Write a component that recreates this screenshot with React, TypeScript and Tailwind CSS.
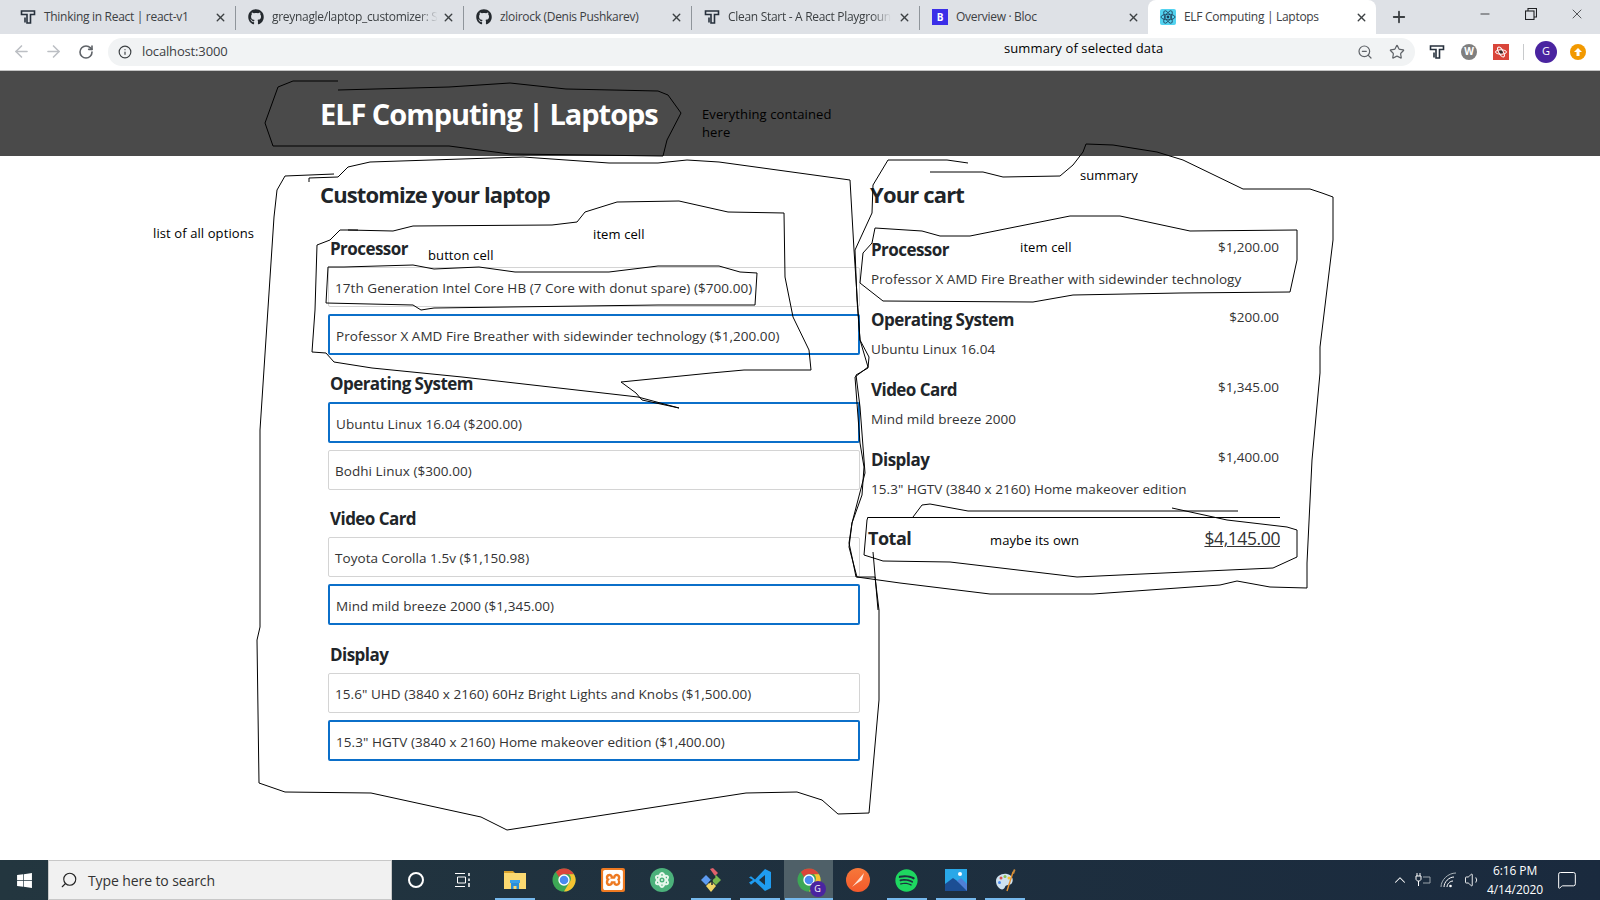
import React from 'react';
import { ArrowLeft, ArrowRight, RotateCw, Info, ZoomOut, Star, X, Plus, Minus, ChevronUp, Volume1, Search, MessageSquare } from 'lucide-react';
import { FaGithub, FaWindows, FaSpotify, FaAtom } from 'react-icons/fa';
import { SiXampp } from 'react-icons/si';

type Pt = [number, number];

const FONT = "font-['Open_Sans',sans-serif]";

const OPTIONS = [
  { name: 'Processor', mt: 'mt-[27px]', choices: [
    { label: '17th Generation Intel Core HB (7 Core with donut spare) ($700.00)', on: false },
    { label: 'Professor X AMD Fire Breather with sidewinder technology ($1,200.00)', on: true },
  ] },
  { name: 'Operating System', mt: 'mt-[17px]', choices: [
    { label: 'Ubuntu Linux 16.04 ($200.00)', on: true },
    { label: 'Bodhi Linux ($300.00)', on: false },
  ] },
  { name: 'Video Card', mt: 'mt-[17px]', choices: [
    { label: 'Toyota Corolla 1.5v ($1,150.98)', on: false },
    { label: 'Mind mild breeze 2000 ($1,345.00)', on: true },
  ] },
  { name: 'Display', mt: 'mt-[18px]', choices: [
    { label: '15.6" UHD (3840 x 2160) 60Hz Bright Lights and Knobs ($1,500.00)', on: false },
    { label: '15.3" HGTV (3840 x 2160) Home makeover edition ($1,400.00)', on: true },
  ] },
];

const CART = [
  { name: 'Processor', value: 'Professor X AMD Fire Breather with sidewinder technology', price: '$1,200.00' },
  { name: 'Operating System', value: 'Ubuntu Linux 16.04', price: '$200.00' },
  { name: 'Video Card', value: 'Mind mild breeze 2000', price: '$1,345.00' },
  { name: 'Display', value: '15.3" HGTV (3840 x 2160) Home makeover edition', price: '$1,400.00' },
];

// freehand marks somebody drew over the screenshot
const SCRIBBLES: Pt[][] = [
  [[338,81],[293,81],[278,87],[265,123],[273,146],[449,146],[510,154],[663,156],[667,140],[681,113],[668,95],[658,91],[566,89],[510,83],[449,87],[338,90]],
  [[334,174],[285,176],[277,190],[274,217],[260,430],[260,627],[257,640],[259,783],[285,792],[371,793],[481,817],[507,830],[746,793],[797,792],[822,800],[838,814],[869,813],[879,700],[879,610],[875,577],[856,577],[852,557],[849,543],[852,523],[862,495],[864,467],[860,443],[855,377],[868,367],[860,340],[854,250],[850,180],[719,162],[687,160],[658,163],[609,163],[523,157],[370,162],[348,167],[338,177],[309,178],[309,182]],
  [[358,230],[340,230],[330,240],[317,245],[315,310],[312,352],[326,353],[334,362],[372,368],[462,377],[638,397],[679,408],[642,400],[636,393],[621,382],[711,373],[744,370],[811,370],[809,350],[793,317],[785,277],[784,213],[728,212],[679,201],[617,202],[585,212],[577,222],[552,225],[413,226],[393,231],[348,230]],
  [[328,267],[344,267],[413,265],[434,269],[479,267],[515,272],[609,272],[658,266],[719,266],[740,272],[757,273],[755,305],[658,305],[434,308],[421,310],[413,305],[326,303],[328,267]],
  [[968,163],[947,160],[888,160],[873,185],[872,213],[855,250],[857,300],[860,340],[869,357],[868,368],[856,375],[860,407],[865,473],[852,523],[849,547],[857,577],[900,583],[990,594],[1093,594],[1220,585],[1237,581],[1270,587],[1307,588],[1307,563],[1312,460],[1320,373],[1320,347],[1333,240],[1333,197],[1322,193],[1310,189],[1243,189],[1183,160],[1157,152],[1113,145],[1086,144],[1083,152],[1073,165],[1060,176],[1003,177],[983,172],[930,172]],
  [[875,228],[922,231],[940,236],[970,236],[1070,216],[1120,216],[1190,231],[1297,230],[1297,260],[1290,292],[1180,293],[1073,295],[1033,302],[883,301],[860,283],[863,253],[872,243],[875,228]],
  [[913,517],[922,505],[930,504],[968,511],[1100,511],[1238,511]],
  [[1172,508],[1227,520],[1287,527],[1297,530],[1297,557],[1273,568],[1207,571],[1077,577],[950,562],[883,561],[864,555],[867,520],[868,517]],
  [[873,552],[878,610]],
];

const NOTES = [
  { text: 'list of all options', cls: 'left-[153px] top-[223px]' },
  { text: 'button cell', cls: 'left-[428px] top-[245px]' },
  { text: 'item cell', cls: 'left-[593px] top-[224px]' },
  { text: 'summary', cls: 'left-[1080px] top-[165px]' },
  { text: 'item cell', cls: 'left-[1020px] top-[237px]' },
  { text: 'maybe its own', cls: 'left-[990px] top-[530px]' },
  { text: 'summary of selected data', cls: 'left-[1004px] top-[38px]' },
  { text: 'Everything contained', cls: 'left-[702px] top-[104px]' },
  { text: 'here', cls: 'left-[702px] top-[122px]' },
];

const TLogo = ({ size = 16 }: { size?: number }) => (
  <svg width={size} height={size} viewBox="0 0 16 16" fill="none" stroke="#27313d" strokeWidth="1.6">
    <path d="M1.5 2h13v3.5h-4V14H7V5.500H1.500z" />
    <path d="M5 8.500v5" />
  </svg>
);

const ReactLogo = () => (
  <svg width="16" height="16" viewBox="0 0 16 16">
    <rect width="16" height="16" rx="2" fill="#53d3f0" />
    <g fill="none" stroke="#1d3b57" strokeWidth="0.8">
      <ellipse cx="8" cy="8" rx="7" ry="2.800" />
      <ellipse cx="8" cy="8" rx="7" ry="2.800" transform="rotate(60 8 8)" />
      <ellipse cx="8" cy="8" rx="7" ry="2.800" transform="rotate(120 8 8)" />
    </g>
    <circle cx="8" cy="8" r="1.400" fill="#1d3b57" />
  </svg>
);

const TABS: { title: string; icon: React.ReactNode; active?: boolean; fade?: boolean }[] = [
  { title: 'Thinking in React | react-v1', icon: <TLogo /> },
  { title: 'greynagle/laptop_customizer: S', icon: <FaGithub className="text-[16px] text-[#24292e]" />, fade: true },
  { title: 'zloirock (Denis Pushkarev)', icon: <FaGithub className="text-[16px] text-[#24292e]" /> },
  { title: 'Clean Start - A React Playgroun', icon: <TLogo />, fade: true },
  { title: 'Overview · Bloc', icon: <span className="flex h-4 w-4 items-center justify-center bg-[#3b2ee8] text-[10px] font-bold text-white">B</span> },
  { title: 'ELF Computing | Laptops', icon: <ReactLogo />, active: true },
];

const ChromeIcon = ({ size = 24 }: { size?: number }) => (
  <svg width={size} height={size} viewBox="0 0 24 24">
    <circle cx="12" cy="12" r="11.500" fill="#3da755" />
    <path d="M12 .5a11.500 11.500 0 0 1 10 5.750H12a5.750 5.750 0 0 0-5 2.900L3.900 3.900A11.500 11.500 0 0 1 12 .5z" fill="#d9453a" />
    <path d="M22 6.250A11.500 11.500 0 0 1 12 23.500l5-8.600a5.750 5.750 0 0 0 0-8.650z" fill="#f5c331" />
    <circle cx="12" cy="12" r="5.700" fill="#fff" />
    <circle cx="12" cy="12" r="4.300" fill="#4a8af0" />
  </svg>
);

const TASKBAR: { key: string; node: React.ReactNode; running?: boolean; focused?: boolean }[] = [
  { key: 'explorer', running: true, node: (
    <svg width="22" height="22" viewBox="0 0 22 22">
      <path d="M0 2h9l2 2H0z" fill="#d9a22c" />
      <rect y="4" width="22" height="16" fill="#fbd971" />
      <path d="M7 20v-6h8v6h-2.500v-3h-3v3z" fill="#2b8ed8" />
      <rect x="6" y="11" width="10" height="3" fill="#39a0e8" />
    </svg>
  ) },
  { key: 'chrome', node: <ChromeIcon /> },
  { key: 'xampp', node: (
    <span className="flex h-6 w-6 items-center justify-center rounded-[2px] bg-[#ee7a22]"><SiXampp className="text-[20px] text-white" /></span>
  ) },
  { key: 'atom', node: (
    <span className="flex h-6 w-6 items-center justify-center rounded-full bg-[#4cb17b]"><FaAtom className="text-[16px] text-[#e8f7ec]" /></span>
  ) },
  { key: 'git', running: true, node: (
    <svg width="24" height="24" viewBox="0 0 24 24">
      <path d="M11 1l3-1 5 5-3 3z" fill="#e2606b" />
      <path d="M7 7l5 5-5 5-5-5z" fill="#5e9cf2" />
      <path d="M17 7l5 5-5 5-5-5z" fill="#79b84f" />
      <path d="M12 13l5 5-5 6-5-6z" fill="#f2d668" />
      <path d="M10 15l3-3 2-3M13 12v5" fill="none" stroke="#1f2d36" strokeWidth="1.500" />
      <circle cx="15" cy="9" r="1.500" fill="#1f2d36" />
    </svg>
  ) },
  { key: 'vscode', running: true, node: (
    <svg width="24" height="24" viewBox="0 0 24 24">
      <path d="M17 1l6 3v16l-6 3-10-9.500-4 3.200L1 14.500 5 12 1 9.500l2-1.200 4 3.200zM17 7l-6 5 6 5z" fill="#1f9cf0" fillRule="evenodd" />
    </svg>
  ) },
  { key: 'chrome-g', running: true, focused: true, node: (
    <span className="relative flex h-6 w-6">
      <ChromeIcon />
      <span className="absolute -bottom-[5px] -right-[5px] flex h-4 w-4 items-center justify-center rounded-full bg-[#4a24a0] text-[9px] text-white">G</span>
    </span>
  ) },
  { key: 'postman', node: (
    <svg width="24" height="24" viewBox="0 0 24 24">
      <defs>
        <linearGradient id="pm" x1="0" y1="0" x2="0" y2="1">
          <stop offset="0" stopColor="#f6783a" />
          <stop offset="1" stopColor="#f4592b" />
        </linearGradient>
      </defs>
      <circle cx="12" cy="12" r="12" fill="url(#pm)" />
      <path d="M6 19L18 5l-2 7-6 4z" fill="#fde3d6" />
    </svg>
  ) },
  { key: 'spotify', running: true, node: <FaSpotify className="text-[23px] text-[#1ed760]" /> },
  { key: 'photos', running: true, node: (
    <svg width="22" height="22" viewBox="0 0 22 22">
      <rect width="22" height="22" fill="#29a8e8" />
      <circle cx="15" cy="5" r="2" fill="#fff" />
      <path d="M0 22V15l8-6 14 10v3z" fill="#1c4e94" />
      <path d="M12 12l4-3 6 6v7z" fill="#4f7fd6" />
    </svg>
  ) },
  { key: 'paint', running: true, node: (
    <svg width="24" height="24" viewBox="0 0 24 24">
      <path d="M3 13c0-5 6-8 11-7 5 1 7 5 5 9-2 3-6 1-7 4-1 3-4 3-6 1-2-2-3-4-3-7z" fill="#cfe2ef" />
      <circle cx="8" cy="10" r="1.500" fill="#d9534f" />
      <circle cx="12" cy="8.500" r="1.500" fill="#8cc152" />
      <circle cx="16" cy="10" r="1.500" fill="#f5c331" />
      <circle cx="6.500" cy="14.500" r="1.500" fill="#4a8af0" />
      <path d="M14 23L20 4" stroke="#e8912d" strokeWidth="1.400" />
      <path d="M19 5l2-4 1.500 1-1.500 4z" fill="#c98a3c" />
    </svg>
  ) },
];

const App: React.FC = () => {
  return (
    <div className={`relative flex h-[900px] w-[1600px] flex-col overflow-hidden bg-white ${FONT}`}>
      {/* tab strip */}
      <div className="flex h-[34px] shrink-0 items-end bg-[#dee1e6] pl-[8px]">
        {TABS.map((tab, i) => (
          <div
            key={tab.title}
            className={`flex h-[34px] w-[228px] shrink-0 items-center gap-[8px] pl-[12px] pr-[8px] text-[12px] tracking-[-0.3px] text-[#3c4043] ${
              tab.active ? 'rounded-t-[8px] bg-white' : i < 4 ? 'border-r border-[#9aa0a6]/70 [border-image:linear-gradient(transparent_20%,#8f959b_20%,#8f959b_85%,transparent_85%)_1]' : ''
            }`}
          >
            <span className="flex w-[16px] shrink-0 justify-center">{tab.icon}</span>
            <span className="min-w-0 flex-1 whitespace-nowrap">
              <span className={`inline-block ${tab.fade ? '[mask-image:linear-gradient(to_right,black_88%,transparent)]' : ''}`}>{tab.title}</span>
            </span>
            <X size={13} strokeWidth={2.6} className="shrink-0 text-[#3c4043]" />
          </div>
        ))}
        <div className="flex h-[34px] w-[46px] shrink-0 items-center justify-center">
          <Plus size={18} strokeWidth={2.4} className="text-[#3c4043]" />
        </div>
        <div className="ml-auto flex h-[34px] items-center self-start pb-[6px] text-[#202124]">
          <div className="flex w-[46px] justify-center"><Minus size={14} strokeWidth={1.4} /></div>
          <div className="flex w-[46px] justify-center">
            <svg width="12" height="12" viewBox="0 0 12 12" fill="none" stroke="currentColor" strokeWidth="1.100">
              <rect x="0.500" y="3" width="8.500" height="8.500" />
              <path d="M3 3V0.500h8.500V9H9" />
            </svg>
          </div>
          <div className="flex w-[46px] justify-center"><X size={16} strokeWidth={1.1} /></div>
        </div>
      </div>

      {/* toolbar */}
      <div className="flex h-[37px] shrink-0 items-center border-b border-[#c4c4c4] bg-white pb-[1px] pl-[12px]">
        <ArrowLeft size={19} strokeWidth={2} className="text-[#bcbfc4]" />
        <ArrowRight size={19} strokeWidth={2} className="ml-[13px] text-[#bcbfc4]" />
        <RotateCw size={16} strokeWidth={2.4} className="ml-[15px] text-[#5f6368]" />
        <div className="ml-[14px] flex h-[28px] w-[1307px] items-center rounded-full bg-[#f1f3f4] pl-[10px] pr-[10px]">
          <Info size={14} strokeWidth={2} className="text-[#3c4043]" />
          <span className="ml-[10px] text-[13px] tracking-[-0.15px] text-[#3c4043]">localhost:3000</span>
          <ZoomOut size={16} strokeWidth={1.8} className="ml-auto text-[#5f6368]" />
          <Star size={16} strokeWidth={1.8} className="ml-[16px] text-[#5f6368]" />
        </div>
        <span className="ml-[14px] flex w-[16px] justify-center"><TLogo /></span>
        <span className="ml-[16px] flex h-4 w-4 items-center justify-center rounded-full bg-[#7f7f7f] text-[10px] font-bold text-white">W</span>
        <span className="ml-[16px] flex h-4 w-4 items-center justify-center bg-[#d9453a]">
          <svg width="12" height="12" viewBox="0 0 12 12" fill="none" stroke="#fff" strokeWidth="1">
            <circle cx="6" cy="6" r="2" fill="#3a2b2b" stroke="none" />
            <ellipse cx="6" cy="6" rx="5.500" ry="2.200" />
            <ellipse cx="6" cy="6" rx="5.500" ry="2.200" transform="rotate(60 6 6)" />
          </svg>
        </span>
        <span className="ml-[14px] h-[16px] w-px bg-[#c8cacc]" />
        <span className="ml-[11px] flex h-[22px] w-[22px] items-center justify-center rounded-full bg-[#4a24a0] text-[11px] text-white">G</span>
        <span className="ml-[13px] flex h-4 w-4 items-center justify-center rounded-full bg-[#f29900]">
          <svg width="10" height="10" viewBox="0 0 10 10"><path d="M5 1l4 4H6.500v4h-3V5H1z" fill="#fff" /></svg>
        </span>
      </div>

      {/* page header */}
      <header className="flex h-[85px] shrink-0 items-center bg-[#4a4a4a] pl-[320px]">
        <h1 className="text-[29px] font-bold tracking-[-1.050px] text-white">ELF Computing | Laptops</h1>
      </header>

      {/* page */}
      <main className="flex flex-1 items-start pl-[320px] pt-[22px]">
        <section className="w-[540px]">
          <h2 className="text-[22px] leading-[32px] font-bold tracking-[-0.85px] text-[#212529]">Customize your laptop</h2>
          {OPTIONS.map((opt) => (
            <fieldset key={opt.name} className={`${opt.mt} pl-[8px]`}>
              <h3 className="mb-[6px] pl-[2px] text-[17px] leading-[24px] font-bold tracking-[-0.55px] text-[#212529]">{opt.name}</h3>
              <div className="flex flex-col gap-[7px]">
                {opt.choices.map((c) => (
                  <button
                    key={c.label}
                    className={`flex w-[532px] items-center rounded-[2px] bg-white text-left text-[13.500px] tracking-[0.05px] text-[#333] ${
                      c.on ? 'h-[41px] border-2 border-[#0b6fc9] pl-[6px] pt-[3px]' : 'h-[40px] border border-[#d4d4d4] pl-[6px] pt-[2px]'
                    }`}
                  >
                    {c.label}
                  </button>
                ))}
              </div>
            </fieldset>
          ))}
        </section>

        <section className="ml-[10px] w-[412px]">
          <h2 className="text-[22px] leading-[32px] font-bold tracking-[-0.85px] text-[#212529]">Your cart</h2>
          <div className="mt-[28px] pl-[1px]">
            {CART.map((item) => (
              <div key={item.name} className="h-[70px] pr-[3px]">
                <div className="flex items-start justify-between">
                  <h3 className="text-[17px] leading-[24px] font-bold tracking-[-0.55px] text-[#212529]">{item.name}</h3>
                  <span className="-mt-[3px] text-[13.500px] leading-[24px] text-[#333]">{item.price}</span>
                </div>
                <p className="mt-[7px] text-[13.500px] leading-[20px] tracking-[0.05px] text-[#333]">{item.value}</p>
              </div>
            ))}
          </div>
          <div className="-ml-[2px] mr-[2px] -mt-[1px] flex items-center justify-between border-t border-black pl-0 pt-[6px]">
            <span className="text-[18px] leading-[28px] font-bold tracking-[-0.5px] text-[#212529]">Total</span>
            <span className="text-[17.500px] leading-[28px] tracking-[-0.4px] text-[#333] underline">$4,145.00</span>
          </div>
        </section>
      </main>

      {/* windows taskbar */}
      <footer className="flex h-[40px] shrink-0 items-center bg-linear-to-r from-[#23363f] to-[#1a2a3e]">
        <div className="flex h-full w-[48px] items-center justify-center">
          <FaWindows className="text-[17px] text-white" />
        </div>
        <div className="flex h-full w-[344px] items-center gap-[10px] border border-[#c8c8c8] bg-[#f1f1f1] pl-[11px] text-[14px] tracking-[-0.1px] text-[#333]">
          <Search size={18} strokeWidth={1.5} className="-scale-x-100 text-[#222]" />
          Type here to search
        </div>
        <div className="flex h-full w-[48px] items-center justify-center">
          <span className="h-[16px] w-[16px] rounded-full border-2 border-white" />
        </div>
        <div className="flex h-full w-[46px] items-center justify-center">
          <svg width="16" height="16" viewBox="0 0 16 16" fill="none" stroke="#fff" strokeWidth="1">
            <path d="M0 1.500h10M2.500 5h8v6h-8zM0 14.500h10" />
            <path d="M14 1v3M14 6.500v2.500M14 11v4" strokeWidth="1.500" />
          </svg>
        </div>
        <div className="ml-[4px] flex h-full">
          {TASKBAR.map((t) => (
            <div key={t.key} className={`relative flex h-full w-[49px] items-center justify-center ${t.focused ? 'bg-[#4f6068]' : ''}`}>
              {t.node}
              {t.running && <span className={`absolute bottom-0 h-[2px] bg-[#76b9ed] ${t.focused ? 'w-[48px]' : 'w-[40px]'}`} />}
            </div>
          ))}
        </div>
        <div className="ml-auto flex h-full items-center text-white">
          <ChevronUp size={18} strokeWidth={1.4} />
          <svg width="16" height="14" viewBox="0 0 16 14" fill="none" stroke="#fff" strokeWidth="1" className="ml-[6px]">
            <path d="M2 0v3M5 0v3M1 3h5v3c0 1-1 2-2.500 2S1 7 1 6zM3.500 8v5" />
            <path d="M8 4h7v6H8" stroke="#9aa3aa" />
          </svg>
          <svg width="18" height="16" viewBox="0 0 18 16" fill="none" stroke="#fff" strokeWidth="1" className="ml-[9px]">
            <path d="M1 15C1 8 8 1 16 1" stroke="#a9b2b8" />
            <path d="M4 15c0-5 5-10 10-10M7 15c0-3 3-6 6-6" />
            <circle cx="10.500" cy="14" r="1.300" fill="#fff" stroke="none" />
          </svg>
          <Volume1 size={18} strokeWidth={1.2} className="ml-[6px]" />
          <div className="ml-[1px] flex w-[64px] flex-col items-center text-[12px] leading-[19px] tracking-[-0.1px] text-white">
            <span>6:16 PM</span>
            <span>4/14/2020</span>
          </div>
          <MessageSquare size={20} strokeWidth={1.2} className="ml-[10px] mr-[23px]" />
        </div>
      </footer>

      {/* freehand annotations over the page */}
      <svg className="pointer-events-none absolute inset-0" width="1600" height="900" fill="none" stroke="#000" strokeWidth="1" strokeLinejoin="round">
        {SCRIBBLES.map((pts, i) => (
          <polyline key={i} points={pts.map((p) => p.join(',')).join(' ')} />
        ))}
      </svg>
      {NOTES.map((n) => (
        <span key={n.text + n.cls} className={`absolute whitespace-nowrap text-[13px] leading-[20px] tracking-[0.1px] text-black ${n.cls}`}>
          {n.text}
        </span>
      ))}
    </div>
  );
};

export default App;
